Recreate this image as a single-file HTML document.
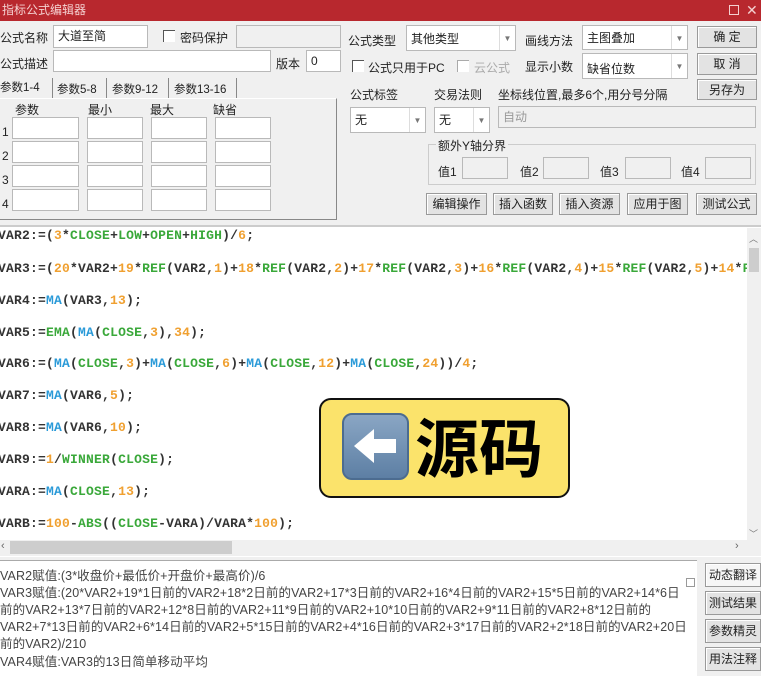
<!DOCTYPE html>
<html><head><meta charset="utf-8"><style>
*{box-sizing:border-box;margin:0;padding:0}
body{width:761px;height:676px;overflow:hidden;background:#f0f0f0;font-family:"Liberation Sans","Noto Sans CJK SC",sans-serif;font-size:12px;color:#222;position:relative}
.a{position:absolute}
.in{position:absolute;background:#fff;border:1px solid #b9b9b9;font-size:12px;padding:3px 4px;line-height:14px}
.dis{background:#f0f0f0}
.btn{position:absolute;background:#e3e3e3;border:1px solid #9a9a9a;text-align:center;font-size:12px;line-height:20px;box-shadow:inset 1px 1px 0 #fff}
.dd{position:absolute;width:16px;right:0;top:0;bottom:0;border-left:1px solid #ddd;color:#777;font-size:8px;text-align:center;padding-top:6px}
.cb{position:absolute;width:12px;height:12px;border-left:1px solid #555;border-top:1px solid #555;background:#fff}
.code{position:absolute;left:-2px;font-family:"Liberation Mono",monospace;font-weight:bold;font-size:13px;letter-spacing:0.2px;color:#333;white-space:nowrap}
.g{color:#3aa83a}.o{color:#f0a030}.b{color:#2a9ad8}
.low{position:absolute;left:0;font-size:12.5px;color:#444;white-space:nowrap;letter-spacing:0.1px}
</style></head><body>
<div class="a" style="left:0;top:0;width:761px;height:21px;background:#b8282e;color:#f4d0d0;font-size:12px;line-height:21px;padding-left:2px">指标公式编辑器
<span class="a" style="left:729px;top:5px;width:10px;height:10px;border:1px solid #f4d0d0"></span><span class="a" style="left:746px;top:0;font-size:14px">✕</span></div>

<div class="a" style="left:0;top:29px">公式名称</div>
<div class="in" style="left:53px;top:25px;width:95px;height:23px">大道至简</div>
<div class="cb" style="left:163px;top:30px"></div><div class="a" style="left:180px;top:29px">密码保护</div>
<div class="in dis" style="left:236px;top:25px;width:105px;height:23px"></div>
<div class="a" style="left:0;top:55px">公式描述</div>
<div class="in" style="left:53px;top:50px;width:218px;height:22px"></div>
<div class="a" style="left:276px;top:55px">版本</div>
<div class="in" style="left:306px;top:50px;width:35px;height:22px">0</div>

<div class="a" style="left:0;top:79px;font-size:11.5px">参数1-4</div>
<div class="a" style="left:52px;top:78px;width:1px;height:20px;background:#888"></div>
<div class="a" style="left:57px;top:81px;font-size:11.5px">参数5-8</div>
<div class="a" style="left:106px;top:78px;width:1px;height:20px;background:#888"></div>
<div class="a" style="left:112px;top:81px;font-size:11.5px">参数9-12</div>
<div class="a" style="left:168px;top:78px;width:1px;height:20px;background:#888"></div>
<div class="a" style="left:174px;top:81px;font-size:11.5px">参数13-16</div>
<div class="a" style="left:236px;top:78px;width:1px;height:20px;background:#888"></div>
<div class="a" style="left:0;top:98px;width:337px;height:122px;border-right:1px solid #888;border-bottom:1px solid #888;border-top:1px solid #fff"></div>
<div class="a" style="left:15px;top:101px">参数</div><div class="a" style="left:88px;top:101px">最小</div><div class="a" style="left:150px;top:101px">最大</div><div class="a" style="left:213px;top:101px">缺省</div>
<div class="a" style="left:2px;top:120px;line-height:24px">1<br>2<br>3<br>4</div>
<div class="a" style="left:12px;top:117px">
<div style="display:grid;grid-template-columns:67px 56px 56px 56px;column-gap:8px;row-gap:2px">
<div class="in" style="position:static;height:22px"></div><div class="in" style="position:static;height:22px"></div><div class="in" style="position:static;height:22px"></div><div class="in" style="position:static;height:22px"></div>
<div class="in" style="position:static;height:22px"></div><div class="in" style="position:static;height:22px"></div><div class="in" style="position:static;height:22px"></div><div class="in" style="position:static;height:22px"></div>
<div class="in" style="position:static;height:22px"></div><div class="in" style="position:static;height:22px"></div><div class="in" style="position:static;height:22px"></div><div class="in" style="position:static;height:22px"></div>
<div class="in" style="position:static;height:22px"></div><div class="in" style="position:static;height:22px"></div><div class="in" style="position:static;height:22px"></div><div class="in" style="position:static;height:22px"></div>
</div></div>

<div class="a" style="left:348px;top:32px">公式类型</div>
<div class="in" style="left:406px;top:25px;width:110px;height:26px;padding-top:6px">其他类型<div class="dd">▼</div></div>
<div class="a" style="left:525px;top:32px">画线方法</div>
<div class="in" style="left:582px;top:25px;width:106px;height:25px;padding-top:5px">主图叠加<div class="dd">▼</div></div>
<div class="btn" style="left:697px;top:26px;width:60px;height:22px">确 定</div>
<div class="cb" style="left:352px;top:60px"></div><div class="a" style="left:368px;top:59px">公式只用于PC</div>
<div class="cb" style="left:457px;top:60px;border-color:#aaa"></div><div class="a" style="left:474px;top:59px;color:#aaa">云公式</div>
<div class="a" style="left:525px;top:58px">显示小数</div>
<div class="in" style="left:582px;top:53px;width:106px;height:26px;padding-top:8px">缺省位数<div class="dd">▼</div></div>
<div class="btn" style="left:697px;top:53px;width:60px;height:22px">取 消</div>
<div class="btn" style="left:697px;top:79px;width:60px;height:21px">另存为</div>
<div class="a" style="left:350px;top:86px">公式标签</div>
<div class="a" style="left:434px;top:86px">交易法则</div>
<div class="a" style="left:498px;top:86px">坐标线位置,最多6个,用分号分隔</div>
<div class="in" style="left:350px;top:107px;width:76px;height:26px;padding-top:5px">无<div class="dd">▼</div></div>
<div class="in" style="left:434px;top:107px;width:56px;height:26px;padding-top:5px">无<div class="dd">▼</div></div>
<div class="in dis" style="left:498px;top:106px;width:258px;height:22px;color:#999">自动</div>
<div class="a" style="left:428px;top:144px;width:328px;height:41px;border:1px solid #ccc"></div>
<div class="a" style="left:436px;top:137px;background:#f0f0f0;padding:0 2px">额外Y轴分界</div>
<div class="a" style="left:438px;top:163px">值1</div><div class="in dis" style="left:462px;top:157px;width:46px;height:22px"></div>
<div class="a" style="left:520px;top:163px">值2</div><div class="in dis" style="left:543px;top:157px;width:46px;height:22px"></div>
<div class="a" style="left:600px;top:163px">值3</div><div class="in dis" style="left:625px;top:157px;width:46px;height:22px"></div>
<div class="a" style="left:681px;top:163px">值4</div><div class="in dis" style="left:705px;top:157px;width:46px;height:22px"></div>
<div class="btn" style="left:426px;top:193px;width:61px;height:22px">编辑操作</div>
<div class="btn" style="left:493px;top:193px;width:60px;height:22px">插入函数</div>
<div class="btn" style="left:559px;top:193px;width:61px;height:22px">插入资源</div>
<div class="btn" style="left:627px;top:193px;width:61px;height:22px">应用于图</div>
<div class="btn" style="left:696px;top:193px;width:61px;height:22px">测试公式</div>

<div class="a" style="left:0;top:225px;width:761px;height:332px;background:#fff;border-top:2px solid #ccc"></div>
<div class="code" style="top:228px">VAR2:=(<span class="o">3</span>*<span class="g">CLOSE</span>+<span class="g">LOW</span>+<span class="g">OPEN</span>+<span class="g">HIGH</span>)/<span class="o">6</span>;</div>
<div class="code" style="top:261px">VAR3:=(<span class="o">20</span>*VAR2+<span class="o">19</span>*<span class="g">REF</span>(VAR2,<span class="o">1</span>)+<span class="o">18</span>*<span class="g">REF</span>(VAR2,<span class="o">2</span>)+<span class="o">17</span>*<span class="g">REF</span>(VAR2,<span class="o">3</span>)+<span class="o">16</span>*<span class="g">REF</span>(VAR2,<span class="o">4</span>)+<span class="o">15</span>*<span class="g">REF</span>(VAR2,<span class="o">5</span>)+<span class="o">14</span>*<span class="g">F</span></div>
<div class="code" style="top:293px">VAR4:=<span class="b">MA</span>(VAR3,<span class="o">13</span>);</div>
<div class="code" style="top:325px">VAR5:=<span class="g">EMA</span>(<span class="b">MA</span>(<span class="g">CLOSE</span>,<span class="o">3</span>),<span class="o">34</span>);</div>
<div class="code" style="top:356px">VAR6:=(<span class="b">MA</span>(<span class="g">CLOSE</span>,<span class="o">3</span>)+<span class="b">MA</span>(<span class="g">CLOSE</span>,<span class="o">6</span>)+<span class="b">MA</span>(<span class="g">CLOSE</span>,<span class="o">12</span>)+<span class="b">MA</span>(<span class="g">CLOSE</span>,<span class="o">24</span>))/<span class="o">4</span>;</div>
<div class="code" style="top:388px">VAR7:=<span class="b">MA</span>(VAR6,<span class="o">5</span>);</div>
<div class="code" style="top:420px">VAR8:=<span class="b">MA</span>(VAR6,<span class="o">10</span>);</div>
<div class="code" style="top:452px">VAR9:=<span class="o">1</span>/<span class="g">WINNER</span>(<span class="g">CLOSE</span>);</div>
<div class="code" style="top:484px">VARA:=<span class="b">MA</span>(<span class="g">CLOSE</span>,<span class="o">13</span>);</div>
<div class="code" style="top:516px">VARB:=<span class="o">100</span>-<span class="g">ABS</span>((<span class="g">CLOSE</span>-VARA)/VARA*<span class="o">100</span>);</div>
<div class="a" style="left:747px;top:228px;width:14px;height:312px;background:#f0f0f0"></div>
<div class="a" style="left:749px;top:248px;width:10px;height:24px;background:#cdcdcd"></div>
<div class="a" style="left:749px;top:232px;font-size:9px;color:#777">︿</div>
<div class="a" style="left:749px;top:527px;font-size:9px;color:#777">﹀</div>
<div class="a" style="left:0;top:540px;width:761px;height:16px;background:#f0f0f0"></div>
<div class="a" style="left:10px;top:541px;width:222px;height:13px;background:#cdcdcd"></div>
<div class="a" style="left:1px;top:540px;color:#666;font-size:11px">‹</div>
<div class="a" style="left:735px;top:540px;color:#666;font-size:11px">›</div>

<div class="a" style="left:0;top:560px;width:697px;height:116px;background:#fff;border-top:1px solid #aaa"></div>
<div class="low" style="top:565px">VAR2赋值:(3*收盘价+最低价+开盘价+最高价)/6</div>
<div class="low" style="top:582px">VAR3赋值:(20*VAR2+19*1日前的VAR2+18*2日前的VAR2+17*3日前的VAR2+16*4日前的VAR2+15*5日前的VAR2+14*6日</div>
<div class="low" style="top:599px">前的VAR2+13*7日前的VAR2+12*8日前的VAR2+11*9日前的VAR2+10*10日前的VAR2+9*11日前的VAR2+8*12日前的</div>
<div class="low" style="top:616px">VAR2+7*13日前的VAR2+6*14日前的VAR2+5*15日前的VAR2+4*16日前的VAR2+3*17日前的VAR2+2*18日前的VAR2+20日</div>
<div class="low" style="top:633px">前的VAR2)/210</div>
<div class="low" style="top:651px">VAR4赋值:VAR3的13日简单移动平均</div>
<div class="a" style="left:686px;top:578px;width:9px;height:9px;border:1px solid #999"></div>
<div class="btn" style="left:705px;top:563px;width:56px;height:24px;line-height:22px;background:#f6f6f6">动态翻译</div>
<div class="btn" style="left:705px;top:591px;width:56px;height:24px;line-height:22px">测试结果</div>
<div class="btn" style="left:705px;top:619px;width:56px;height:24px;line-height:22px">参数精灵</div>
<div class="btn" style="left:705px;top:647px;width:56px;height:24px;line-height:22px">用法注释</div>

<div class="a" style="left:319px;top:398px;width:251px;height:100px;background:#fbe36b;border:2px solid #111;border-radius:12px"></div>
<div class="a" style="left:342px;top:413px;width:67px;height:67px;border-radius:10px;background:linear-gradient(#8aa6c4,#5d7fa4);border:2px solid #4c6c90">
<svg width="63" height="63" viewBox="0 0 63 63"><path d="M10 31 L30 14 L30 24 L52 24 L52 38 L30 38 L30 48 Z" fill="#fff"/></svg></div>
<div class="a" style="left:415px;top:404px;font-family:'Noto Sans CJK SC',sans-serif;font-size:64px;line-height:82px;font-weight:bold;color:#000">源码</div>
</body></html>
